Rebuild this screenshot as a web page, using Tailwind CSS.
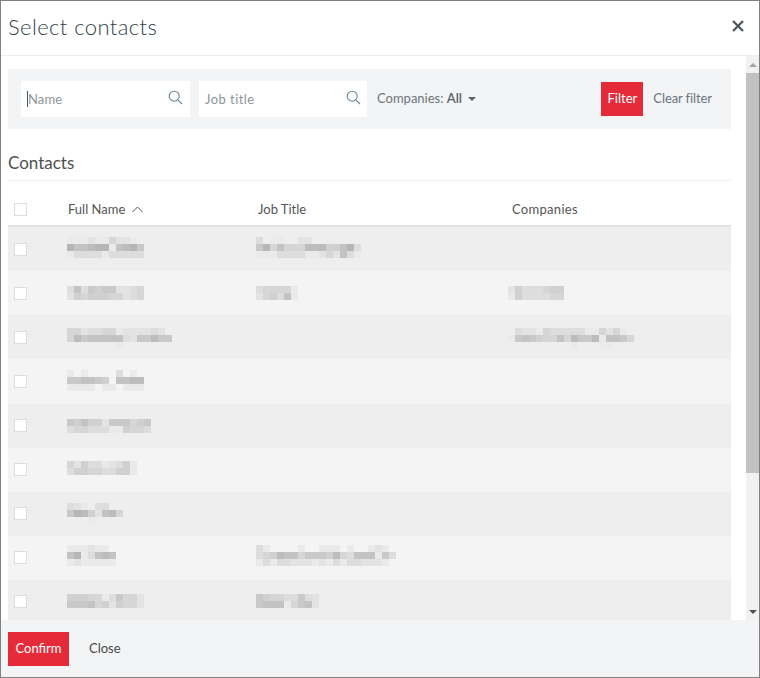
<!DOCTYPE html>
<html lang="en">

<head>
  <meta charset="UTF-8" />
  <title>Select contacts</title>
  <script src="https://cdn.jsdelivr.net/npm/@tailwindcss/browser@4"></script>
</head>

<body class="bg-white font-['Lato',sans-serif]">
  <div class="w-[760px] h-[678px] border border-[#808080] flex flex-col overflow-hidden">
    <!-- Modal header -->
    <div class="h-[55px] shrink-0 border-b border-[#eeeeee] pl-[7px] pr-[15px] flex items-center justify-between">
      <h3 class="text-[22px] font-light text-[#343f47] tracking-[0.4px] -mt-[4px]">Select contacts</h3>
      <button class="w-[12px] h-[12px] -mt-[5px]">
        <svg class="w-[12px] h-[12px]" viewBox="0 0 12 12" fill="none" stroke="#46555f" stroke-width="2.2">
          <path d="M1 1l10 10M11 1L1 11" />
        </svg>
      </button>
    </div>

    <div class="flex flex-1 min-h-0">
      <!-- Modal body -->
      <div class="flex-1 min-w-0 pl-[7px] pr-[15px] pt-[13px] overflow-hidden">
        <div class="h-[60px] bg-[#f3f4f6] flex items-center pl-[13px] pr-[19px]">
          <div class="relative w-[169px] h-[36px] bg-white flex items-center pl-[6px]">
            <span class="w-px h-[16px] bg-[#46555f]"></span>
            <span class="text-[13px] text-[#8b949b] pt-[2px] tracking-[0.1px]">Name</span>
            <svg class="absolute right-[7px] top-[9px] w-[15px] h-[15px]" viewBox="0 0 15 15" fill="none" stroke="#6b8494" stroke-width="1.1">
              <circle cx="6.2" cy="6.2" r="5" />
              <path d="M9.8 9.8l4.2 4.2" />
            </svg>
          </div>
          <div class="relative w-[168px] h-[36px] bg-white flex items-center pl-[6px] ml-[9px]">
            <span class="text-[13px] text-[#8b949b] pt-[2px] tracking-[0.45px]">Job title</span>
            <svg class="absolute right-[6px] top-[9px] w-[15px] h-[15px]" viewBox="0 0 15 15" fill="none" stroke="#6b8494" stroke-width="1.1">
              <circle cx="6.2" cy="6.2" r="5" />
              <path d="M9.8 9.8l4.2 4.2" />
            </svg>
          </div>
          <div class="ml-[10px] flex items-center text-[13px] text-[#6c757d]">
            Companies:&nbsp;<span class="font-semibold text-[#56616a]">All</span>
            <span class="ml-[6px] w-0 h-0 border-x-[4px] border-x-transparent border-t-[4px] border-t-[#56616a]"></span>
          </div>
          <button class="ml-auto w-[42px] h-[34px] bg-[#e52b3a] text-white text-[13px]">Filter</button>
          <button class="ml-[10px] text-[13px] text-[#6c757d] tracking-[-0.1px]">Clear filter</button>
        </div>

        <h4 class="h-[52px] pt-[24px] border-b border-[#eeeeee] text-[17px] font-normal leading-[20px] text-[#4f4f4f]">Contacts</h4>

        <div class="h-[46px] pt-[13px] border-b-2 border-[#dee2e6] flex items-center text-[13px] text-[#555555]">
          <div class="w-[60px] pl-[6px]">
            <div class="w-[13px] h-[13px] border border-[#dddddd] bg-white"></div>
          </div>
          <div class="w-[190px] flex items-center">Full Name
            <svg class="ml-[7px] w-[11px] h-[7px]" viewBox="0 0 11 7" fill="none" stroke="#555555" stroke-width="1">
              <path d="M.5 6L5.5 1l5 5" />
            </svg>
          </div>
          <div class="w-[254px]">Job Title</div>
          <div class="tracking-[0.3px]">Companies</div>
        </div>

        <div id="contact-rows"></div>
      </div>

      <!-- Scrollbar -->
      <div class="w-[13px] shrink-0 bg-[#f1f1f1] flex flex-col">
        <div class="h-[17px] flex items-center justify-center">
          <span class="w-0 h-0 border-x-[4px] border-x-transparent border-b-[4px] border-b-[#a3a3a3]"></span>
        </div>
        <div class="h-[400px] bg-[#c1c1c1]"></div>
        <div class="flex-1 flex items-end justify-center pb-[6px]">
          <span class="w-0 h-0 border-x-[4px] border-x-transparent border-t-[4px] border-t-[#505050]"></span>
        </div>
      </div>
    </div>

    <!-- Modal footer -->
    <div class="h-[57px] shrink-0 bg-[#f3f4f6] pl-[7px] pt-[12px] flex items-start">
      <button class="w-[61px] h-[34px] bg-[#e52b3a] text-white text-[13px]">Confirm</button>
      <button class="ml-[20px] h-[34px] text-[13px] text-[#4a4a4a]">Close</button>
    </div>
  </div>

  <script>
    // names are redacted in the picture, so each cell is a small mosaic: one hex digit per block, 0 = empty
    var rows = [
      { h: 44, top: 10, name: ['11121142210', '97789917896', '13333133333'], job: ['301100220000000', '694744488855793', '111333311242731'] },
      { h: 44, top: 15, name: ['37365662234', '25455544234'], job: ['344441', '245371'], co: ['25333455', '15333344'] },
      { h: 44, top: 13, name: ['442334412222320', '486777773266866', '000000010000000'], co: ['032214333331142410', '167654474866817764', '000000000100011000'] },
      { h: 45, top: 11, name: ['101000030100', '667765077880', '111101101110'] },
      { h: 44, top: 15, name: ['657552666456', '344333115443'] },
      { h: 44, top: 13, name: ['4253312351', '3554433551'] },
      { h: 44, top: 11, name: ['32103300', '69852784', '00010000'] },
      { h: 44, top: 9, name: ['11121100', '79137870', '12111110'], job: ['31000010011101001210', '34587746665843777163', '13133222121313322210'] },
      { h: 40, top: 14, name: ['55544136442', '66674525442'], job: ['654433632', '677714672'] }
    ];

    function mosaic(lines) {
      if (!lines) return '';
      return lines.map(function (line) {
        var blocks = line.split('').map(function (ch) {
          var d = parseInt(ch, 16);
          if (!d) return '<span class="w-[7px] h-[7px]"></span>';
          var g = Math.round(240 - d * 6.5);
          return '<span class="w-[7px] h-[7px]" style="background:rgb(' + g + ',' + g + ',' + g + ')"></span>';
        }).join('');
        return '<div class="flex">' + blocks + '</div>';
      }).join('');
    }

    document.getElementById('contact-rows').innerHTML = rows.map(function (r, i) {
      return '<div class="flex ' + (i % 2 ? 'bg-[#f4f4f4]' : 'bg-[#eeeeee]') + '" style="height:' + r.h + 'px">' +
        '<div class="w-[59px] pl-[6px]" style="padding-top:' + (i < 4 ? 16 : 15) + 'px"><div class="w-[13px] h-[13px] border border-[#dddddd] bg-white"></div></div>' +
        '<div class="w-[189px]" style="padding-top:' + r.top + 'px">' + mosaic(r.name) + '</div>' +
        '<div class="w-[252px]" style="padding-top:' + r.top + 'px">' + mosaic(r.job) + '</div>' +
        '<div style="padding-top:' + r.top + 'px">' + mosaic(r.co) + '</div>' +
        '</div>';
    }).join('');
  </script>
</body>

</html>
